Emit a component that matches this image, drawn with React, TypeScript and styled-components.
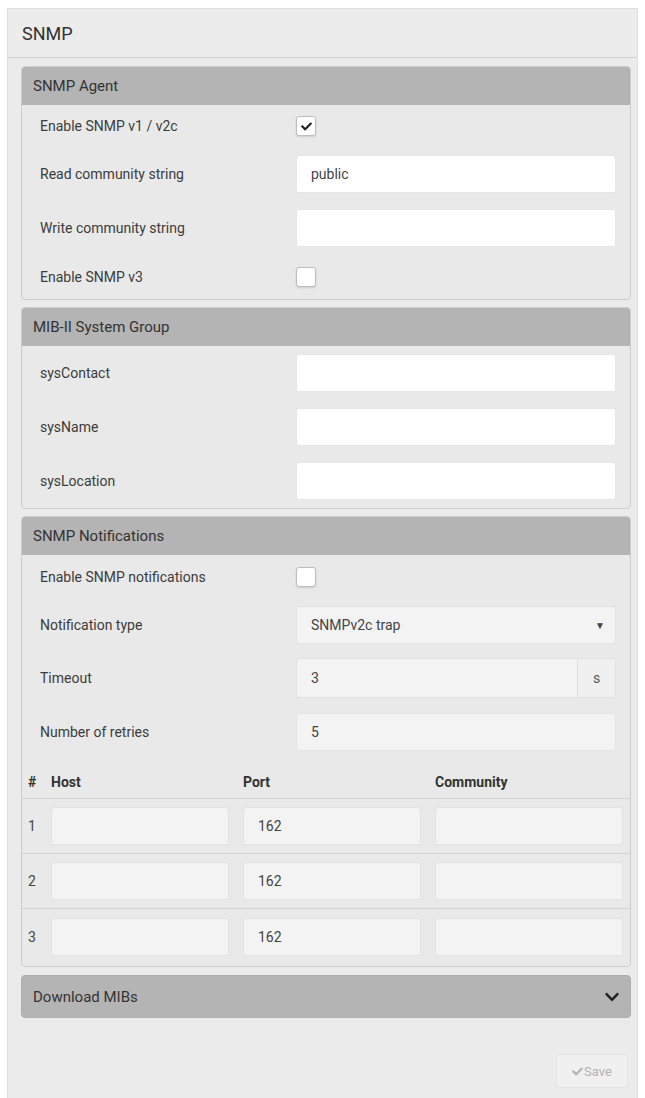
import React from 'react';
import styled, { createGlobalStyle } from 'styled-components';
import { FaCheck, FaChevronDown } from 'react-icons/fa';

const GlobalStyle = createGlobalStyle`
  html, body {
    margin: 0;
    padding: 0;
    background: #fff;
  }
  body {
    font-family: Roboto, "Liberation Sans", Arial, sans-serif;
    color: #3c3c3c;
  }
`;

const Panel = styled.div`
  margin: 8px 7px 0 7px;
  height: 1090px;
  background: #ebebeb;
  border: 1px solid #dedede;
  border-bottom: none;
  box-sizing: border-box;
  display: flex;
  flex-direction: column;
`;

const PanelHeading = styled.div`
  height: 48px;
  display: flex;
  align-items: center;
  padding-left: 14px;
  font-size: 18px;
  color: #333;
  border-bottom: 1px solid #d2d2d2;
  background: #ececec;
`;

const PanelBody = styled.div`
  padding: 8px 6px 0 13px;
  display: flex;
  flex-direction: column;
  gap: 7px;
`;

const Section = styled.div`
  border: 1px solid #cdcdcd;
  border-radius: 4px;
  background: #e9e9e9;
  overflow: hidden;
`;

const SectionHeader = styled.div`
  height: 38px;
  display: flex;
  align-items: center;
  padding: 0 11px;
  background: #b4b4b4;
  font-size: 15px;
  color: #333;
`;

const FormRow = styled.div<{ $h: number }>`
  height: ${(p) => p.$h}px;
  display: grid;
  grid-template-columns: 256px 1fr;
  align-items: center;
  padding: 0 14px 0 18px;
`;

const Label = styled.span`
  font-size: 14px;
  color: #3c3c3c;
`;

const TextInput = styled.div<{ $muted?: boolean }>`
  height: 38px;
  box-sizing: border-box;
  display: flex;
  align-items: center;
  padding: 0 14px;
  background: ${(p) => (p.$muted ? '#f3f3f3' : '#ffffff')};
  border: 1px solid ${(p) => (p.$muted ? '#e2e2e2' : '#e6e6e6')};
  border-radius: 3px;
  font-size: 14px;
  color: #444;
`;

const SelectBox = styled(TextInput)`
  justify-content: space-between;
  padding-right: 10px;
`;

const Caret = styled.span`
  font-size: 10px;
  color: #444;
`;

const InputGroup = styled.div`
  display: flex;
  height: 40px;
  box-sizing: border-box;
  border: 1px solid #e2e2e2;
  border-radius: 3px;
  background: #f3f3f3;
  overflow: hidden;
`;

const GroupField = styled.div`
  flex: 1;
  display: flex;
  align-items: center;
  padding: 0 14px;
  font-size: 14px;
  color: #444;
`;

const Addon = styled.div`
  width: 37px;
  display: flex;
  align-items: center;
  justify-content: center;
  border-left: 1px solid #dcdcdc;
  background: #f0f0f0;
  font-size: 14px;
  color: #555;
`;

const Checkbox = styled.div`
  width: 20px;
  height: 20px;
  box-sizing: border-box;
  border: 1px solid #bdbdbd;
  border-radius: 3px;
  background: #fff;
  display: flex;
  align-items: center;
  justify-content: center;
  color: #222;
  box-shadow: 0 1px 2px rgba(0, 0, 0, 0.12);
`;

const HostTable = styled.div`
  padding-bottom: 2px;
`;

const TableHead = styled.div`
  height: 40px;
  display: grid;
  grid-template-columns: 9px 178px 178px 1fr;
  column-gap: 14px;
  align-items: end;
  padding: 0 7px 8px 6px;
  box-sizing: border-box;
  border-bottom: 1px solid #d3d3d3;
  font-size: 14px;
  font-weight: 700;
  color: #333;
`;

const TableRow = styled.div`
  height: 55px;
  box-sizing: border-box;
  display: grid;
  grid-template-columns: 9px 178px 178px 1fr;
  column-gap: 14px;
  align-items: center;
  padding: 0 7px 0 6px;
  border-bottom: 1px solid #d3d3d3;
  font-size: 14px;
  color: #444;

  &:last-child {
    border-bottom: none;
  }
`;

const Collapsed = styled.div`
  height: 43px;
  margin-top: 1px;
  border-radius: 4px;
  background: #b4b4b4;
  border: 1px solid #adadad;
  box-sizing: border-box;
  display: flex;
  align-items: center;
  justify-content: space-between;
  padding: 0 10px 0 11px;
  font-size: 15px;
  color: #333;
`;

const Footer = styled.div`
  display: flex;
  justify-content: flex-end;
  padding: 36px 9px 0 0;
`;

const SaveButton = styled.button`
  height: 34px;
  width: 72px;
  border: 1px solid #e3e3e3;
  border-radius: 3px;
  background: #f0f0f0;
  color: #b3b3b3;
  font-family: Roboto, "Liberation Sans", Arial, sans-serif;
  font-size: 13px;
  display: flex;
  align-items: center;
  justify-content: center;
  gap: 1px;
  padding: 0;
`;

const hosts = [1, 2, 3];

const App: React.FC = () => {
  return (
    <>
      <GlobalStyle />
      <Panel>
        <PanelHeading>SNMP</PanelHeading>
        <PanelBody>
          <Section>
            <SectionHeader>SNMP Agent</SectionHeader>
            <FormRow $h={42}>
              <Label>Enable SNMP v1 / v2c</Label>
              <Checkbox>
                <FaCheck size={11} />
              </Checkbox>
            </FormRow>
            <FormRow $h={54}>
              <Label>Read community string</Label>
              <TextInput>public</TextInput>
            </FormRow>
            <FormRow $h={54}>
              <Label>Write community string</Label>
              <TextInput />
            </FormRow>
            <FormRow $h={44}>
              <Label>Enable SNMP v3</Label>
              <Checkbox />
            </FormRow>
          </Section>

          <Section>
            <SectionHeader>MIB-II System Group</SectionHeader>
            <FormRow $h={54}>
              <Label>sysContact</Label>
              <TextInput />
            </FormRow>
            <FormRow $h={54}>
              <Label>sysName</Label>
              <TextInput />
            </FormRow>
            <FormRow $h={54}>
              <Label>sysLocation</Label>
              <TextInput />
            </FormRow>
          </Section>

          <Section>
            <SectionHeader>SNMP Notifications</SectionHeader>
            <FormRow $h={44}>
              <Label>Enable SNMP notifications</Label>
              <Checkbox />
            </FormRow>
            <FormRow $h={52}>
              <Label>Notification type</Label>
              <SelectBox $muted>
                SNMPv2c trap
                <Caret>▼</Caret>
              </SelectBox>
            </FormRow>
            <FormRow $h={54}>
              <Label>Timeout</Label>
              <InputGroup>
                <GroupField>3</GroupField>
                <Addon>s</Addon>
              </InputGroup>
            </FormRow>
            <FormRow $h={54}>
              <Label>Number of retries</Label>
              <TextInput $muted>5</TextInput>
            </FormRow>
            <HostTable>
              <TableHead>
                <span>#</span>
                <span>Host</span>
                <span>Port</span>
                <span>Community</span>
              </TableHead>
              {hosts.map((n) => (
                <TableRow key={n}>
                  <span>{n}</span>
                  <TextInput $muted />
                  <TextInput $muted>162</TextInput>
                  <TextInput $muted />
                </TableRow>
              ))}
            </HostTable>
          </Section>

          <Collapsed>
            Download MIBs
            <FaChevronDown size={16} color="#222" />
          </Collapsed>
        </PanelBody>
        <Footer>
          <SaveButton>
            <FaCheck size={11} />
            Save
          </SaveButton>
        </Footer>
      </Panel>
    </>
  );
};

export default App;
